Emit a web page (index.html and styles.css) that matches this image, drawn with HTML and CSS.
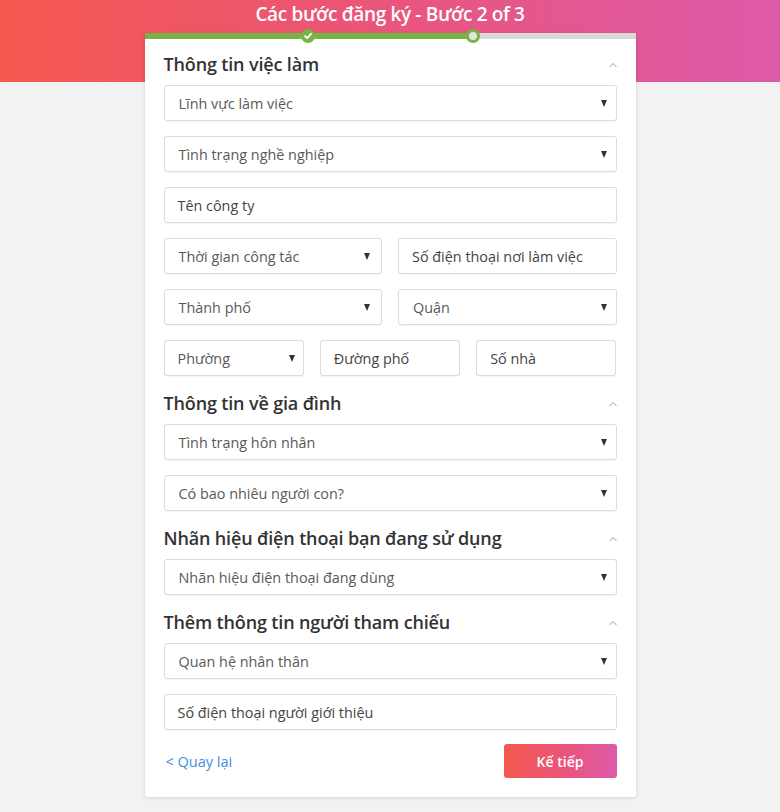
FILE: index.html
```html
<!DOCTYPE html>
<html lang="vi">
<head>
<meta charset="utf-8">
<link rel="stylesheet" href="styles.css">
</head>
<body>
<div class="hero">
  <div class="hero-title">Các bước đăng ký - Bước 2 of 3</div>
</div>
<div class="card">
  <div class="progress">
    <div class="progress-fill"></div>
    <span class="dot dot-done"><svg width="10" height="10" viewBox="0 0 10 10"><polyline points="2,5.2 4.2,7.2 8,2.8" fill="none" stroke="#fff" stroke-width="1.8" stroke-linecap="round" stroke-linejoin="round"/></svg></span>
    <span class="dot dot-current"></span>
  </div>
  <div class="body">
    <div class="section-head"><span>Thông tin việc làm</span><svg class="chev" width="10" height="6" viewBox="0 0 10 6"><polyline points="1.5,5 5,1.5 8.5,5" fill="none" stroke="#c4c4c4" stroke-width="1.2"/></svg></div>
    <div class="field select">Lĩnh vực làm việc</div>
    <div class="field select">Tình trạng nghề nghiệp</div>
    <div class="field text">Tên công ty</div>
    <div class="row two">
      <div class="field select">Thời gian công tác</div>
      <div class="field text">Số điện thoại nơi làm việc</div>
    </div>
    <div class="row two">
      <div class="field select">Thành phố</div>
      <div class="field select">Quận</div>
    </div>
    <div class="row three">
      <div class="field select">Phường</div>
      <div class="field text">Đường phố</div>
      <div class="field text">Số nhà</div>
    </div>

    <div class="section-head"><span>Thông tin về gia đình</span><svg class="chev" width="10" height="6" viewBox="0 0 10 6"><polyline points="1.5,5 5,1.5 8.5,5" fill="none" stroke="#c4c4c4" stroke-width="1.2"/></svg></div>
    <div class="field select">Tình trạng hôn nhân</div>
    <div class="field select">Có bao nhiêu người con?</div>

    <div class="section-head"><span>Nhãn hiệu điện thoại bạn đang sử dụng</span><svg class="chev" width="10" height="6" viewBox="0 0 10 6"><polyline points="1.5,5 5,1.5 8.5,5" fill="none" stroke="#c4c4c4" stroke-width="1.2"/></svg></div>
    <div class="field select">Nhãn hiệu điện thoại đang dùng</div>

    <div class="section-head"><span>Thêm thông tin người tham chiếu</span><svg class="chev" width="10" height="6" viewBox="0 0 10 6"><polyline points="1.5,5 5,1.5 8.5,5" fill="none" stroke="#c4c4c4" stroke-width="1.2"/></svg></div>
    <div class="field select">Quan hệ nhân thân</div>
    <div class="field text">Số điện thoại người giới thiệu</div>

    <div class="actions">
      <a class="back">&lt; Quay lại</a>
      <button class="next">Kế tiếp</button>
    </div>
  </div>
</div>
</body>
</html>
```

FILE: styles.css
```css
* { box-sizing: border-box; }
html, body { margin: 0; padding: 0; }
body {
  background: #f2f2f2;
  font-family: "Open Sans", "Noto Sans", sans-serif;
  color: #333;
  height: 812px;
  overflow: hidden;
}
.hero {
  height: 82px;
  background: linear-gradient(90deg, #f5584e 0%, #e9557c 50%, #dd5aa9 100%);
  text-align: center;
}
.hero-title {
  color: #fff;
  font-size: 19px;
  font-weight: 600;
  line-height: 28px;
  letter-spacing: -0.35px;
}
.card {
  width: 491px;
  margin: -49px auto 0;
  background: #fff;
  box-shadow: 0 1px 4px rgba(0,0,0,0.12);
  border-radius: 0 0 3px 3px;
}
.progress {
  position: relative;
  height: 6px;
  background: #d9d9d9;
}
.progress-fill {
  width: 328px;
  height: 6px;
  background: #78b443;
}
.dot {
  position: absolute;
  top: -4px;
  width: 14px;
  height: 14px;
  border-radius: 50%;
  display: flex;
  align-items: center;
  justify-content: center;
}
.dot-done { left: 156px; background: #78b443; }
.dot-current { left: 321px; background: #e3e3e3; border: 3px solid #78b443; }
.body {
  padding: 13px 19px 19px;
}
.section-head {
  display: flex;
  justify-content: space-between;
  align-items: center;
  height: 24px;
  margin: 0 0 9px;
  font-size: 18px;
  font-weight: 600;
  color: #333;
  letter-spacing: -0.15px;
}
.chev { margin-right: -1px; margin-top: 1px; }
.field {
  height: 36px;
  border: 1px solid #dcdcdc;
  border-radius: 3px;
  background: #fff;
  box-shadow: 0 1px 1px rgba(0,0,0,0.04);
  display: flex;
  align-items: center;
  padding: 0 14px;
  font-size: 14.4px;
  color: #595959;
  margin-bottom: 15px;
  white-space: nowrap;
  overflow: hidden;
}
.field.text { color: #444; padding-left: 13px; }
.field.select { justify-content: space-between; padding-right: 9px; }
.field.select::after {
  content: "";
  width: 0;
  height: 0;
  border-left: 3.5px solid transparent;
  border-right: 3.5px solid transparent;
  border-top: 7px solid #333;
}
.row { display: grid; column-gap: 16px; }
.row.two { grid-template-columns: 1fr 1fr; }
.row.three { grid-template-columns: 1fr 1fr 1fr; }
.row .field { min-width: 0; }
.row.three .field { padding-left: 13px; }
.row.three .field.select { padding-right: 8px; }
.row.two .field.select:first-child { padding-right: 11px; }
.actions {
  display: flex;
  justify-content: space-between;
  align-items: center;
  margin-top: -1px;
}
.back {
  color: #3e8ee0;
  font-size: 14.5px;
  padding-left: 2px;
}
.next {
  width: 113px;
  height: 34px;
  border: 0;
  border-radius: 3px;
  background: linear-gradient(90deg, #f5584e 0%, #e9557c 55%, #dd5aa9 100%);
  color: #fff;
  font-family: "Open Sans", "Noto Sans", sans-serif;
  font-size: 14px;
  font-weight: 600;
}
```
